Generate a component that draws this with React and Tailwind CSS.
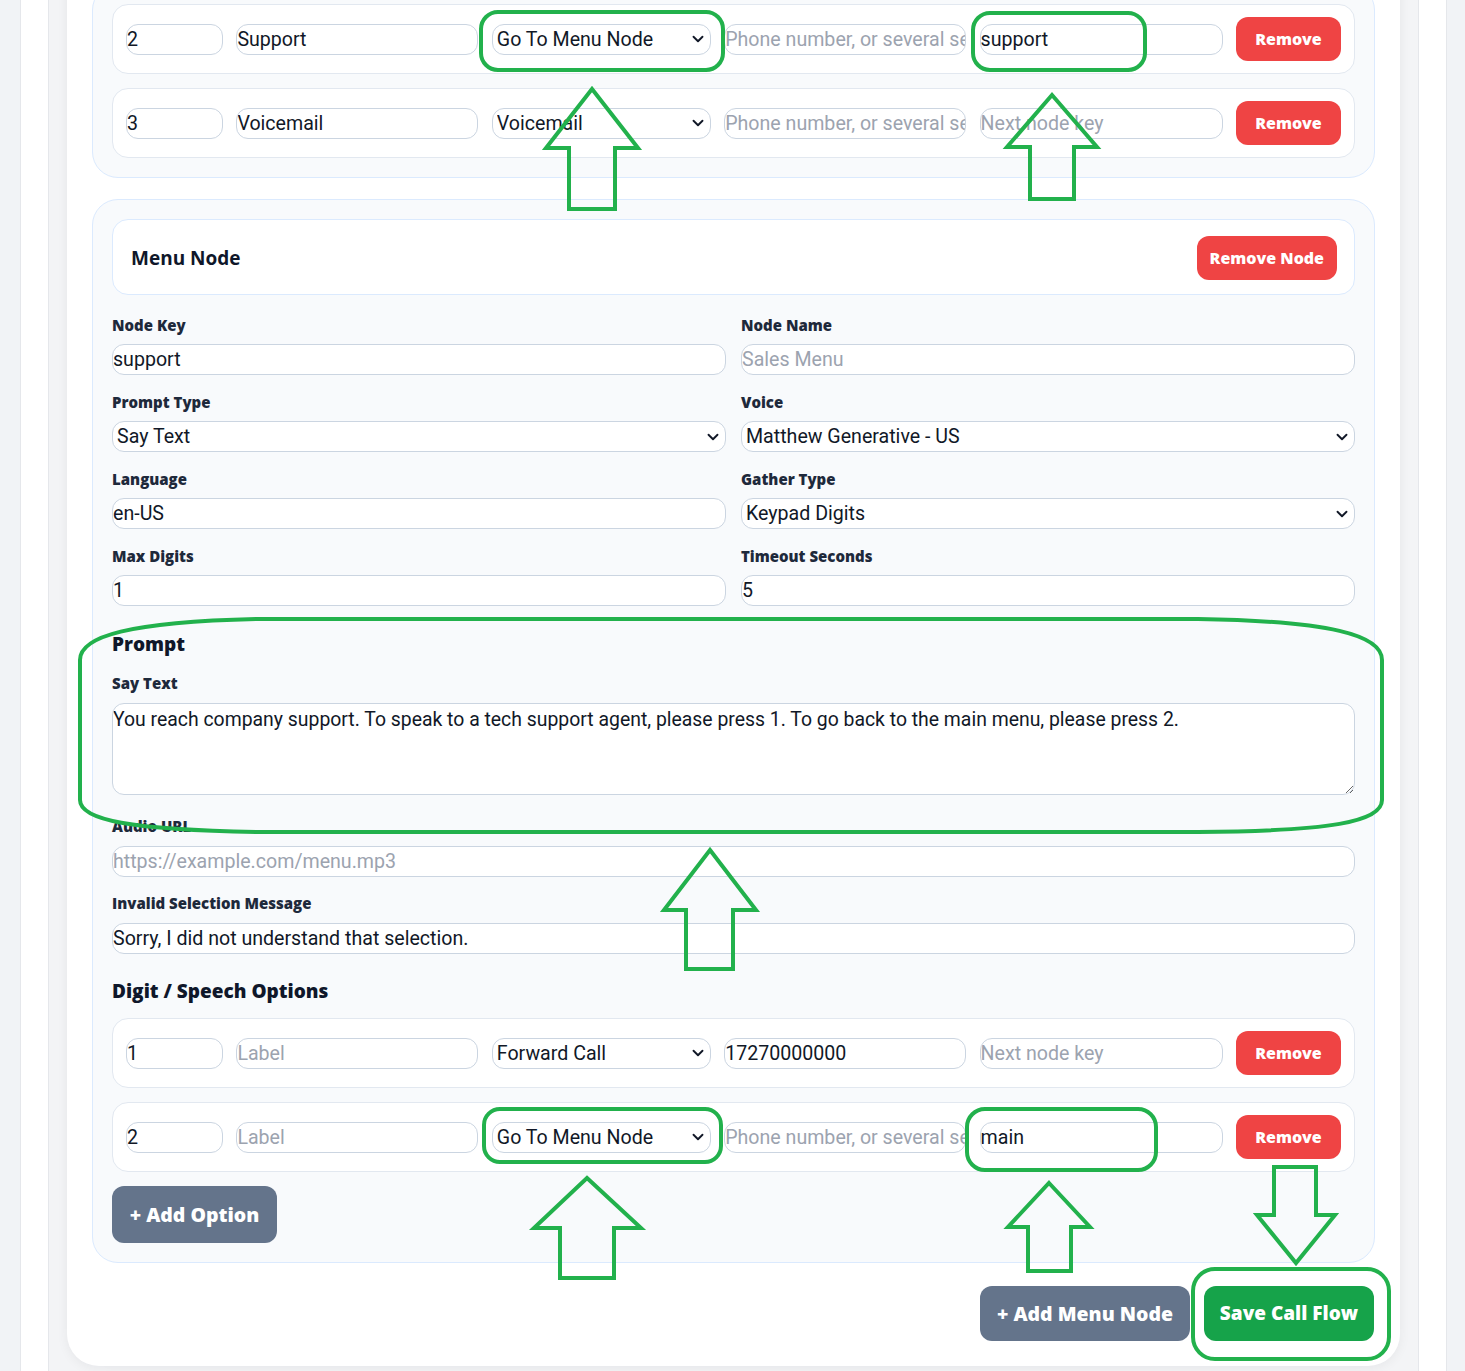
import React from 'react'
import { ChevronDown } from 'lucide-react'

const PHONE_PH = 'Phone number, or several separated by commas'

const TOP_OPTIONS = [
  { digit: '2', label: 'Support', action: 'menu', phone: '', next: 'support' },
  { digit: '3', label: 'Voicemail', action: 'voicemail', phone: '', next: '' },
]

const MENU_OPTIONS = [
  { digit: '1', label: '', action: 'forward', phone: '17270000000', next: '' },
  { digit: '2', label: '', action: 'menu', phone: '', next: 'main' },
]

const ACTIONS = [
  { value: 'forward', label: 'Forward Call' },
  { value: 'menu', label: 'Go To Menu Node' },
  { value: 'voicemail', label: 'Voicemail' },
  { value: 'hangup', label: 'Hang Up' },
]

const BOLD = "font-['Open_Sans','Liberation_Sans',sans-serif] font-extrabold"

const inputCls =
  'block w-full h-[31px] rounded-xl border border-[#cbd5e1] bg-white px-0 text-[19.6px] text-[#111827] outline-none placeholder:text-[#9ca3af]'

function TextInput({ className = '', value, placeholder }) {
  return (
    <input
      className={`${inputCls} ${className}`}
      defaultValue={value}
      placeholder={placeholder}
    />
  )
}

function Select({ className = '', value, options }) {
  return (
    <div className={`relative ${className}`}>
      <select
        className="block w-full h-[31px] appearance-none rounded-xl border border-[#cbd5e1] bg-white pl-[4px] pr-6 text-[19.6px] text-[#111827] outline-none"
        defaultValue={value}
      >
        {options.map(o => (
          <option key={o.value} value={o.value}>{o.label}</option>
        ))}
      </select>
      <ChevronDown
        size={18}
        strokeWidth={2.5}
        className="pointer-events-none absolute right-[4px] top-1/2 -translate-y-1/2 text-[#111827]"
      />
    </div>
  )
}

function Label({ children }) {
  return <div className={`h-[20px] text-[15px] leading-[20px] text-[#1e293b] ${BOLD}`}>{children}</div>
}

function Field({ label, children }) {
  return (
    <div>
      <Label>{label}</Label>
      <div className="mt-[9px]">{children}</div>
    </div>
  )
}

function OptionRow({ opt }) {
  return (
    <div className="flex items-center justify-between rounded-2xl border border-[#e2e8f0] bg-white px-[13px] py-[12px]">
      <TextInput className="!w-[97px]" value={opt.digit} />
      <TextInput className="!w-[242px]" value={opt.label} placeholder="Label" />
      <Select className="w-[219px]" value={opt.action} options={ACTIONS} />
      <TextInput className="!w-[242px]" value={opt.phone} placeholder={PHONE_PH} />
      <TextInput className="!w-[243px]" value={opt.next} placeholder="Next node key" />
      <button className={`h-[44px] w-[105px] rounded-xl bg-[#ef4444] text-[16px] text-white ${BOLD}`}>
        Remove
      </button>
    </div>
  )
}

// green markup drawn on top of the screenshot
function upArrow(tx, ty, hy, hl, hr, sl, sr, by) {
  return `M${tx} ${ty} L${hr} ${hy} L${sr} ${hy} L${sr} ${by} L${sl} ${by} L${sl} ${hy} L${hl} ${hy} Z`
}

function Annotations() {
  const g = '#22b14c'
  return (
    <svg
      className="pointer-events-none absolute left-0 top-0"
      width="1465"
      height="1371"
      viewBox="0 0 1465 1371"
      fill="none"
      stroke={g}
      strokeWidth="4"
    >
      <rect x="481" y="12" width="242" height="58" rx="17" />
      <rect x="973" y="13" width="172" height="57" rx="17" />
      <rect x="484" y="1109" width="237" height="53" rx="16" />
      <rect x="967" y="1109" width="189" height="61" rx="18" />
      <rect x="1193" y="1269" width="196" height="90" rx="22" />
      <path d="M256 619 L1198 619 C1330 621 1382 635 1382 660 L1382 800 C1382 822 1330 831 1198 832 L261 832 C130 830 80 820 80 800 L80 660 C80 636 130 622 256 619 Z" />
      <path d={upArrow(592, 89, 148, 546, 638, 569, 615, 209)} />
      <path d={upArrow(1052, 95, 147, 1007, 1097, 1030, 1074, 199)} />
      <path d={upArrow(710, 850, 910, 664, 756, 686, 733, 969)} />
      <path d={upArrow(587, 1178, 1228, 534, 641, 560, 614, 1278)} />
      <path d={upArrow(1049, 1183, 1227, 1008, 1090, 1028, 1071, 1271)} />
      <path d="M1274 1167 L1316 1167 L1316 1215 L1335 1215 L1296 1263 L1257 1215 L1274 1215 Z" />
    </svg>
  )
}

export default function App() {
  return (
    <div className="relative h-[1371px] overflow-hidden bg-[#f1f3f6] font-['Roboto','Liberation_Sans',sans-serif]">
      <div className="ml-[20px] flow-root h-full w-[1427px] border-x border-[#e5e7eb] bg-white px-[27px]">
        <div className="flow-root h-full border-x border-[#e5e7eb] bg-[#f3f4f6] px-[18px]">
          <div className="-mt-[41px] rounded-[32px] bg-white px-[25px] pb-[25px] pt-[25px] shadow-[0_2px_12px_rgba(15,23,42,0.06)]">
            {/* tail of the previous node */}
            <div className="rounded-[26px] border border-[#dbeafe] bg-[#f8fafc] p-[19px]">
              <div className="flex flex-col gap-[14px]">
                {TOP_OPTIONS.map((o, i) => <OptionRow key={i} opt={o} />)}
              </div>
            </div>

            {/* Menu node */}
            <div className="mt-[21px] rounded-[26px] border border-[#dbeafe] bg-[#f8fafc] p-[19px]">
              <div className="flex h-[76px] items-center justify-between rounded-2xl border border-[#dbeafe] bg-white pl-[18px] pr-[17px] pt-[2px]">
                <h2 className="text-[19px] font-['Open_Sans','Liberation_Sans',sans-serif] font-bold text-[#0f172a]">Menu Node</h2>
                <button className={`h-[44px] rounded-xl bg-[#ef4444] px-[13px] text-[16px] text-white ${BOLD}`}>
                  Remove Node
                </button>
              </div>

              <div className="mt-[20px] grid grid-cols-2 gap-x-[15px] gap-y-[17px]">
                <Field label="Node Key"><TextInput value="support" /></Field>
                <Field label="Node Name"><TextInput value="" placeholder="Sales Menu" /></Field>
                <Field label="Prompt Type">
                  <Select value="say" options={[{ value: 'say', label: 'Say Text' }, { value: 'audio', label: 'Play Audio' }]} />
                </Field>
                <Field label="Voice">
                  <Select value="matthew" options={[{ value: 'matthew', label: 'Matthew Generative - US' }, { value: 'joanna', label: 'Joanna Generative - US' }]} />
                </Field>
                <Field label="Language"><TextInput value="en-US" /></Field>
                <Field label="Gather Type">
                  <Select value="dtmf" options={[{ value: 'dtmf', label: 'Keypad Digits' }, { value: 'speech', label: 'Speech' }]} />
                </Field>
                <Field label="Max Digits"><TextInput value="1" /></Field>
                <Field label="Timeout Seconds"><TextInput value="5" /></Field>
              </div>

              <h3 className={`mt-[24px] text-[19px] leading-[28px] text-[#0f172a] ${BOLD}`}>Prompt</h3>
              <div className="mt-[15px]">
                <Label>Say Text</Label>
                <textarea
                  className="mt-[10px] block h-[92px] w-full rounded-xl border border-[#cbd5e1] bg-white px-0 pt-[3px] text-[19.4px] leading-[26px] text-[#111827] outline-none"
                  defaultValue="You reach company support. To speak to a tech support agent, please press 1. To go back to the main menu, please press 2."
                />
              </div>
              <div className="mt-[21px]">
                <Label>Audio URL</Label>
                <div className="mt-[10px]"><TextInput value="" placeholder="https://example.com/menu.mp3" /></div>
              </div>
              <div className="mt-[16px]">
                <Label>Invalid Selection Message</Label>
                <div className="mt-[10px]"><TextInput value="Sorry, I did not understand that selection." /></div>
              </div>

              <h3 className={`mt-[23px] text-[19px] leading-[28px] text-[#0f172a] ${BOLD}`}>Digit / Speech Options</h3>
              <div className="mt-[13px] flex flex-col gap-[14px]">
                {MENU_OPTIONS.map((o, i) => <OptionRow key={i} opt={o} />)}
              </div>
              <button className={`mt-[14px] h-[57px] w-[165px] rounded-xl bg-[#64748b] text-[19.5px] text-white ${BOLD}`}>
                + Add Option
              </button>
            </div>

            <div className="mt-[23px] flex justify-end gap-[14px] pr-px">
              <button className={`h-[55px] w-[210px] rounded-xl bg-[#64748b] text-[19.5px] text-white ${BOLD}`}>
                + Add Menu Node
              </button>
              <button className={`h-[55px] w-[170px] rounded-xl bg-[#16a34a] text-[19px] text-white ${BOLD}`}>
                Save Call Flow
              </button>
            </div>
          </div>
        </div>
      </div>
      <Annotations />
    </div>
  )
}
